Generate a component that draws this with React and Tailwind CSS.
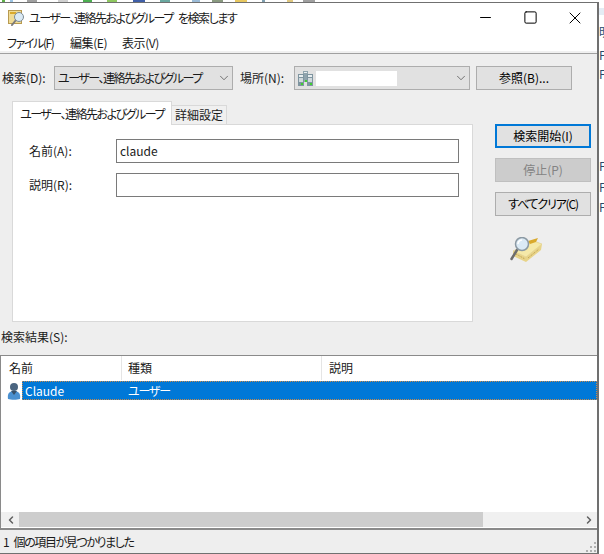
import React from 'react';
import { Minus, Square, X, ChevronDown, ChevronLeft, ChevronRight } from 'lucide-react';

const font = "font-['Noto_Sans_CJK_JP','Noto_Sans',sans-serif] [font-feature-settings:'palt']";

const ServerIcon = () => (
  <svg width="15" height="15" viewBox="0 0 15 15" className="shrink-0">
    <rect x="5" y="0" width="5" height="11" fill="#8fa3ad" />
    <rect x="0" y="3" width="6" height="12" fill="#7f95a0" />
    <rect x="9" y="3" width="6" height="12" fill="#7f95a0" />
    <rect x="6" y="1" width="3" height="1" fill="#e8eef0" />
    <rect x="1" y="4" width="4" height="2" fill="#e8eef0" />
    <rect x="10" y="4" width="4" height="2" fill="#e8eef0" />
    <rect x="1" y="7" width="4" height="4" fill="#cfd8dc" />
    <rect x="10" y="7" width="4" height="4" fill="#cfd8dc" />
    <rect x="3" y="12" width="2" height="2" fill="#3fd02f" />
    <rect x="7" y="9" width="2" height="2" fill="#3fd02f" />
    <rect x="12" y="12" width="2" height="2" fill="#3fd02f" />
  </svg>
);

const TitleIcon = () => (
  <svg width="17" height="16" viewBox="0 0 17 16">
    <rect x="0.5" y="0.5" width="13" height="13" fill="#f0dc96" stroke="#b89a50" />
    <rect x="2" y="2" width="6" height="2" fill="#d9a92c" />
    <line x1="8" y1="10" x2="4" y2="15" stroke="#7a7a7a" strokeWidth="2" strokeLinecap="round" />
    <circle cx="11" cy="7" r="4.5" fill="#dbeaf5" stroke="#7c8b95" />
  </svg>
);

const FolderSearchIcon = () => (
  <svg width="33" height="26" viewBox="0 0 33 26">
    <path d="M3 14 L24 4 L32 7 L16 20 Z" fill="#f5e9a8" stroke="#d8c47c" strokeWidth="0.5" />
    <path d="M3 14 L16 20 L32 7 L31 13 L16 25 L3 19 Z" fill="#e8d488" />
    <path d="M6 17 L15 22 M18 21 L29 12" stroke="#b89a50" strokeWidth="1" strokeDasharray="1 1" />
    <path d="M18 4 L28 1 L26 5 L20 7 Z" fill="#d9a92c" />
    <line x1="7" y1="13" x2="1.5" y2="22" stroke="#6d6d6d" strokeWidth="2.5" strokeLinecap="round" />
    <circle cx="12" cy="7" r="6.5" fill="#dbeaf5" stroke="#8b99a3" strokeWidth="1.5" />
    <path d="M8 7 A4.5 4.5 0 0 1 12 3" stroke="#fff" strokeWidth="1.5" fill="none" />
  </svg>
);

const UserIcon = () => (
  <svg width="14" height="18" viewBox="0 0 14 18" className="shrink-0">
    <circle cx="7" cy="5" r="4" fill="#4a6580" />
    <path d="M1 17 C0 11 3 9 7 9 C11 9 14 11 13 17 C10 18 4 18 1 17 Z" fill="#4a90d0" />
    <path d="M4 9 L7 13 L10 9 Z" fill="#36506a" />
  </svg>
);

const Button = ({ children, variant, className }) => {
  const styles = {
    default: 'border border-[#adadad] bg-[#e1e1e1] text-black',
    primary: 'border-2 border-[#0078d7] bg-[#e1e1e1] text-black',
    disabled: 'border border-[#bfbfbf] bg-[#cccccc] text-[#838383]',
  };
  return (
    <div className={`flex h-6 w-24 items-center justify-center text-xs ${styles[variant || 'default']} ${className || ''}`}>
      {children}
    </div>
  );
};

const Fragment = ({ top, text }) => (
  <div className="h-0 whitespace-nowrap text-xs leading-none text-[#2a4a6a]" style={{ marginTop: top }}>
    {text}
  </div>
);

const noise = [
  'ml-[2px] w-[3px] bg-[#5fb04a]',
  'ml-[5px] w-[3px] bg-[#9cc4e4]',
  'ml-[14px] w-[10px] bg-[#a0a0a0]',
  'ml-[21px] w-[10px] bg-[#d0d0d0]',
  'ml-[15px] w-[9px] bg-[#4caf50]',
  'ml-[15px] w-[10px] bg-[#8fc860]',
  'ml-[16px] w-[12px] bg-[#3f5fa8]',
  'ml-[15px] w-[10px] bg-[#6aa8a0]',
  'ml-[22px] w-[8px] bg-[#9cbcd8]',
  'ml-[12px] w-[11px] bg-[#8a9a80]',
  'ml-[12px] w-[12px] bg-[#e8c860]',
  'ml-[15px] w-[3px] bg-[#7f9fb0]',
  'ml-[22px] w-[6px] bg-[#e0c880]',
  'ml-[10px] w-[12px] bg-[#a0a0a0]',
];

export default function App() {
  return (
    <div className={`flex h-[554px] w-[604px] overflow-hidden bg-white text-xs text-[#1a1a1a] ${font}`}>
      <div className="flex h-full w-[599px] shrink-0 flex-col">
        {/* desktop behind the window */}
        <div className="flex h-[2px] shrink-0 bg-white">
          {noise.map((cls, i) => (
            <div key={i} className={`h-full ${cls}`} />
          ))}
        </div>

        <div className="flex min-h-0 flex-1 flex-col border-r-2 border-t border-b border-[#707070]">
          {/* title bar */}
          <div className="flex h-[32px] shrink-0 items-center bg-white pb-[2px]">
            <div className="ml-2 flex w-[21px] shrink-0">
              <TitleIcon />
            </div>
            <span className="tracking-[-1.5px] [word-spacing:4px]">ユーザー、連絡先およびグループ を検索します</span>
            <div className="ml-auto flex items-center pb-[1px]">
              <div className="flex w-[45px] justify-center">
                <Minus size={17} strokeWidth={1} absoluteStrokeWidth className="text-black" />
              </div>
              <div className="flex w-[45px] justify-center">
                <Square size={15} strokeWidth={1} absoluteStrokeWidth className="text-black" />
              </div>
              <div className="flex w-[44px] justify-center">
                <X size={20} strokeWidth={1} absoluteStrokeWidth className="text-black" />
              </div>
            </div>
          </div>

          {/* menu */}
          <div className="flex h-[16px] shrink-0 items-center bg-white pl-[7px] text-xs">
            <span className="w-[63px] tracking-[-1.4px]">ファイル(F)</span>
            <span className="w-[52px] tracking-[-0.4px]">編集(E)</span>
            <span className="tracking-[-0.4px]">表示(V)</span>
          </div>
          <div className="h-[3px] shrink-0 border-b border-[#a0a0a0] bg-[#f0f0f0]" />

          <div className="flex min-h-0 flex-1 flex-col bg-[#eeeeee]">
            {/* search scope row */}
            <div className="mt-[12px] flex h-6 shrink-0 items-center pl-[2px]">
              <span className="w-[52px]">検索(D):</span>
              <div className="flex h-6 w-[179px] items-center justify-between border border-[#adadad] bg-[#e1e1e1] pl-[3px] pr-px">
                <span className="whitespace-nowrap tracking-[-1.5px]">ユーザー、連絡先およびグループ</span>
                <ChevronDown size={14} strokeWidth={1.2} className="text-[#444]" />
              </div>
              <span className="ml-[7px] w-[54px]">場所(N):</span>
              <div className="flex h-6 w-[176px] items-center border border-[#adadad] bg-[#e1e1e1] pl-[3px] pr-px">
                <ServerIcon />
                <div className="ml-[3px] h-[15px] w-[81px] bg-white" />
                <ChevronDown size={14} strokeWidth={1.2} className="ml-auto text-[#444]" />
              </div>
              <div className="ml-[6px]">
                <Button>参照(B)...</Button>
              </div>
            </div>

            <div className="mt-[11px] flex shrink-0">
              {/* tabs and panel */}
              <div className="ml-3 flex w-[461px] flex-col">
                <div className="flex h-[23px] items-end">
                  <div className="z-10 -mb-px flex h-[24px] w-[160px] items-center justify-center whitespace-nowrap border border-b-0 border-[#d9d9d9] bg-white tracking-[-1.5px]">
                    ユーザー、連絡先およびグループ
                  </div>
                  <div className="flex h-[19px] w-[55px] items-center justify-center border border-l-0 border-b-0 border-[#d9d9d9] bg-[#f0f0f0]">
                    詳細設定
                  </div>
                </div>
                <div className="flex h-[198px] flex-col gap-[10px] border border-[#d9d9d9] bg-white pt-[14px]">
                  <div className="flex items-center pl-4">
                    <span className="w-[87px] pb-px">名前(A):</span>
                    <div className="flex h-6 w-[343px] items-center border border-[#7a7a7a] bg-white pb-px pl-[3px]">claude</div>
                  </div>
                  <div className="flex items-center pl-4">
                    <span className="w-[87px]">説明(R):</span>
                    <div className="h-6 w-[343px] border border-[#7a7a7a] bg-white" />
                  </div>
                </div>
              </div>

              {/* action buttons */}
              <div className="ml-[22px] flex flex-col gap-[10px] pt-[23px]">
                <Button variant="primary">検索開始(I)</Button>
                <Button variant="disabled">停止(P)</Button>
                <Button className="tracking-[-1.2px]">すべてクリア(C)</Button>
                <div className="ml-[15px] mt-[11px]">
                  <FolderSearchIcon />
                </div>
              </div>
            </div>

            <div className="flex h-[33px] shrink-0 items-center pb-[4px] pl-[1px]">検索結果(S):</div>

            {/* result list */}
            <div className="flex min-h-0 flex-1 flex-col border-t border-l border-[#8a8a8a] bg-white">
              <div className="flex h-[25px] shrink-0 items-center pb-px">
                <div className="flex h-full w-[121px] items-center border-r border-[#e5e5e5] pl-2">名前</div>
                <div className="flex h-full w-[200px] items-center border-r border-[#e5e5e5] pl-[6px]">種類</div>
                <div className="pl-[7px]">説明</div>
              </div>
              <div className="flex h-[19px] shrink-0 items-center">
                <div className="flex w-[21px] justify-end pr-[1px]">
                  <UserIcon />
                </div>
                <div className="flex h-full flex-1 items-center border border-dotted border-[#c98a4a] bg-[#0078d7] pl-[2px] text-white">
                  <span className="w-[103px]">Claude</span>
                  <span className="tracking-[-1.2px]">ユーザー</span>
                </div>
              </div>
              <div className="flex-1" />
              <div className="mb-[1px] flex h-[15px] shrink-0 items-center bg-[#f0f0f0] pl-px">
                <div className="flex w-[17px] justify-center">
                  <ChevronLeft size={12} strokeWidth={3} className="text-[#606060]" />
                </div>
                <div className="h-full w-[464px] bg-[#cdcdcd]" />
                <div className="ml-auto flex w-[17px] justify-center">
                  <ChevronRight size={12} strokeWidth={3} className="text-[#606060]" />
                </div>
              </div>
            </div>

            {/* status bar */}
            <div className="flex h-[25px] shrink-0 items-center justify-between border-t-2 border-[#8a8a8a] pl-[3px] pr-px">
              <span className="tracking-[-1.4px] [word-spacing:4px]">1 個の項目が見つかりました</span>
              <svg width="10" height="10" viewBox="0 0 10 10" className="mb-px mt-auto">
                <path d="M8 0h2v2H8zM4 4h2v2H4zM8 4h2v2H8zM0 8h2v2H0zM4 8h2v2H4zM8 8h2v2H8z" fill="#b0b0b0" />
              </svg>
            </div>
          </div>
        </div>
      </div>

      {/* window behind, cut off at the edge */}
      <div className="flex min-w-0 flex-1 flex-col overflow-hidden">
        <div className="mt-[8px] h-[7px] shrink-0 bg-[#e4ecf4]" />
        <Fragment top={11} text="明" />
        <Fragment top={23} text="Fa" />
        <Fragment top={19} text="Fa" />
        <Fragment top={92} text="Fa" />
        <Fragment top={21} text="Fa" />
        <Fragment top={20} text="Fa" />
      </div>
    </div>
  );
}
